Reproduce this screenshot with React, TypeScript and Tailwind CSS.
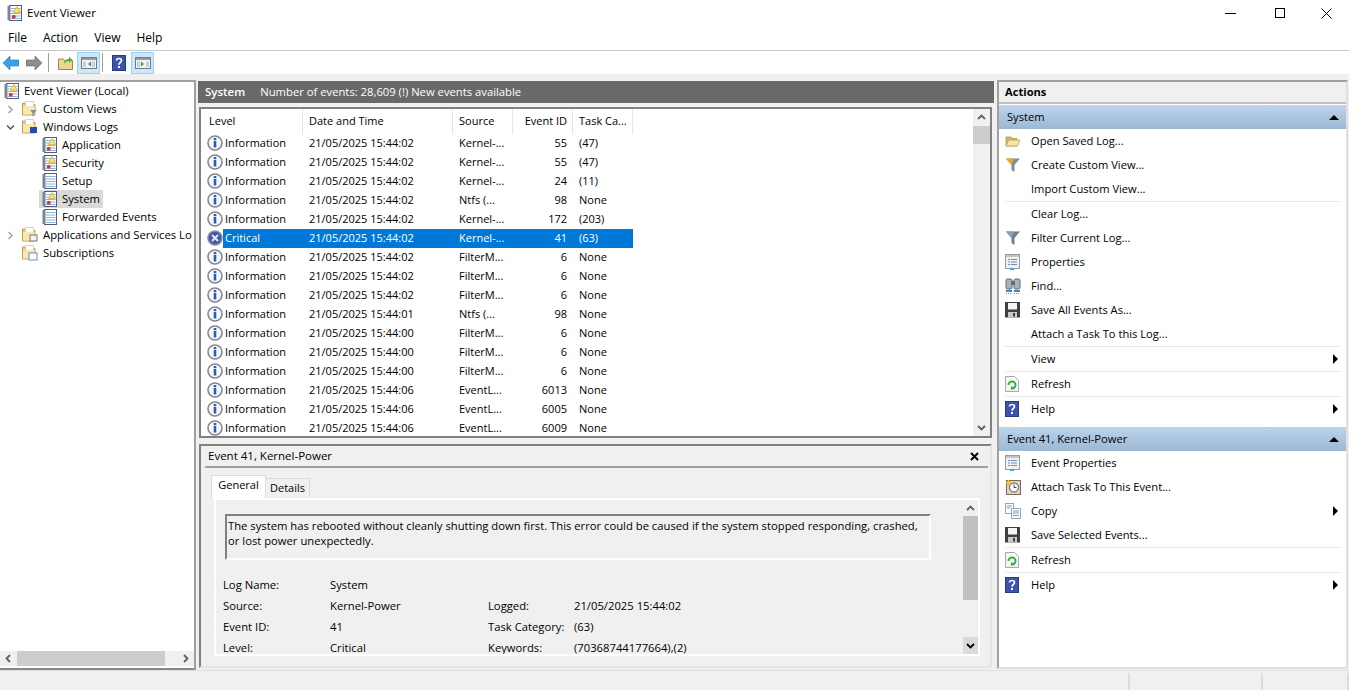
import React from "react";

const rows = [
  ["Information", "21/05/2025 15:44:02", "Kernel-...", "55", "(47)"],
  ["Information", "21/05/2025 15:44:02", "Kernel-...", "55", "(47)"],
  ["Information", "21/05/2025 15:44:02", "Kernel-...", "24", "(11)"],
  ["Information", "21/05/2025 15:44:02", "Ntfs (...", "98", "None"],
  ["Information", "21/05/2025 15:44:02", "Kernel-...", "172", "(203)"],
  ["Critical", "21/05/2025 15:44:02", "Kernel-...", "41", "(63)"],
  ["Information", "21/05/2025 15:44:02", "FilterM...", "6", "None"],
  ["Information", "21/05/2025 15:44:02", "FilterM...", "6", "None"],
  ["Information", "21/05/2025 15:44:02", "FilterM...", "6", "None"],
  ["Information", "21/05/2025 15:44:01", "Ntfs (...", "98", "None"],
  ["Information", "21/05/2025 15:44:00", "FilterM...", "6", "None"],
  ["Information", "21/05/2025 15:44:00", "FilterM...", "6", "None"],
  ["Information", "21/05/2025 15:44:00", "FilterM...", "6", "None"],
  ["Information", "21/05/2025 15:44:06", "EventL...", "6013", "None"],
  ["Information", "21/05/2025 15:44:06", "EventL...", "6005", "None"],
  ["Information", "21/05/2025 15:44:06", "EventL...", "6009", "None"],
];

function LogIcon({ warn = true }: { warn?: boolean }) {
  return (
    <svg width="16" height="16" viewBox="0 0 16 16" className="shrink-0">
      <rect x="2.5" y="0.5" width="12" height="15" fill="#fff" stroke="#4f5f7d" />
      <rect x="0.5" y="1" width="3" height="14" fill="#7a8598" />
      <path d="M4 3.500h9.500M4 6h9.500M4 8.500h9.500M4 11h9.500M4 13.500h9.500" stroke="#8fb0d8" />
      {warn && <path d="M10 1.500 13.500 7.500h-7z" fill="#f8e36a" stroke="#c9a21f" strokeWidth="0.6" />}
      {warn && <rect x="5" y="10" width="3.500" height="3.500" rx="1.200" fill="#d8323c" />}
    </svg>
  );
}

function FolderIcon({ children }: { children?: React.ReactNode }) {
  return (
    <svg width="16" height="16" viewBox="0 0 16 16" className="shrink-0">
      <path d="M0.5 2h5l1 1.500h6.500v10.500H0.500z" fill="#e9cb7c" stroke="#c0a052" />
      <path d="M3.500 0.500h8v5h-8z" fill="#fff" stroke="#c9c2ac" strokeWidth="0.7" />
      <path d="M1 5h11.500v8.500H1z" fill="#fae7ad" />
      {children}
    </svg>
  );
}

function InfoIcon() {
  return (
    <svg width="16" height="16" viewBox="0 0 16 16" className="shrink-0">
      <circle cx="8" cy="8" r="7" fill="#f7f8fa" stroke="#84878f" strokeWidth="1.600" />
      <rect x="6.700" y="3" width="2.600" height="2.200" fill="#2c5cb4" />
      <rect x="6.700" y="6" width="2.600" height="6.500" fill="#2c5cb4" />
    </svg>
  );
}

function CriticalIcon() {
  return (
    <svg width="16" height="16" viewBox="0 0 16 16" className="shrink-0">
      <circle cx="8" cy="8" r="7" fill="#3f5aa8" stroke="#8d8f9c" strokeWidth="1.600" />
      <path d="M5 5l6 6M11 5l-6 6" stroke="#e8e6f2" strokeWidth="1.900" />
    </svg>
  );
}

function HelpIcon({ size = 14 }: { size?: number }) {
  return (
    <svg width={size} height={size + 2} viewBox="0 0 14 16" className="shrink-0">
      <rect x="0.5" y="0.5" width="13" height="15" fill="#3a52b0" stroke="#2a3a80" />
      <path d="M4.500 5.500C4.500 2.800 9.500 2.800 9.500 5.500 9.500 7.500 7 7.500 7 9.700" fill="none" stroke="#fff" strokeWidth="1.700" />
      <rect x="6" y="11" width="2" height="2" fill="#fff" />
    </svg>
  );
}

function PaneIcon({ side }: { side: "left" | "right" }) {
  return (
    <svg width="16" height="12" viewBox="0 0 16 12">
      <rect x="0.5" y="0.5" width="15" height="11" fill="#f4f4f4" stroke="#7a7a7a" />
      <rect x="1" y="1" width="14" height="2" fill="#9a9a9a" />
      <rect x="2" y="4.500" width="3" height="5.500" fill="#bcd0e6" />
      <rect x="11" y="4.500" width="3" height="5.500" fill="#bcd0e6" />
      {side === "left" ? <path d="M10 4.500v5L7 7z" fill="#2f9e44" /> : <path d="M6 4.500v5L9 7z" fill="#2f9e44" />}
    </svg>
  );
}

function Chevron({ open = false }: { open?: boolean }) {
  return (
    <svg width="9" height="9" viewBox="0 0 9 9" className="shrink-0">
      {open ? (
        <path d="M1 2.500 4.500 6 8 2.500" fill="none" stroke="#555" strokeWidth="1.500" />
      ) : (
        <path d="M2.500 1 6 4.500 2.500 8" fill="none" stroke="#a6a6a6" strokeWidth="1.500" />
      )}
    </svg>
  );
}

function ScrollArrow({ dir, color = "#606060" }: { dir: "up" | "down" | "left" | "right"; color?: string }) {
  const d = {
    up: "M1 6 4.500 2.500 8 6",
    down: "M1 3 4.500 6.500 8 3",
    left: "M6 1 2.500 4.500 6 8",
    right: "M3 1 6.500 4.500 3 8",
  }[dir];
  return (
    <svg width="9" height="9" viewBox="0 0 9 9">
      <path d={d} fill="none" stroke={color} strokeWidth="1.800" />
    </svg>
  );
}

function BranchRow({ chevron, icon, label }: { chevron?: "open" | "closed"; icon: React.ReactNode; label: string }) {
  return (
    <div className="flex h-[18px] items-center whitespace-nowrap pl-[4px]">
      <span className="mr-[5px] flex w-[13px] justify-center">
        {chevron && <Chevron open={chevron === "open"} />}
      </span>
      {icon}
      <span className="ml-[5px] text-[11.3px]">{label}</span>
    </div>
  );
}

function LeafRow({ warn, label, selected }: { warn?: boolean; label: string; selected?: boolean }) {
  return (
    <div className="flex h-[18px] pl-[39px]">
      <span className={`flex items-center px-[3px] ${selected ? "bg-[#d9d9d9]" : ""}`}>
        <LogIcon warn={warn} />
        <span className="ml-[4px] text-[11.3px]">{label}</span>
      </span>
    </div>
  );
}

function ActionRow({ icon, label, arrow }: { icon?: React.ReactNode; label: string; arrow?: boolean }) {
  return (
    <div className="flex h-6 items-center pl-[6px] pr-[8px]">
      <span className="flex w-[26px] shrink-0 items-center">{icon}</span>
      <span className="flex-1">{label}</span>
      {arrow && <span className="h-0 w-0 border-y-[5px] border-l-[5px] border-y-transparent border-l-black" />}
    </div>
  );
}

function Sep() {
  return <div className="mx-[6px] h-px bg-[#e8e8e8]" />;
}

function Band({ label }: { label: string }) {
  return (
    <div className="flex h-6 items-center justify-between bg-gradient-to-b from-[#bdd4ea] to-[#9cb8d5] pl-[8px] pr-[7px]">
      <span>{label}</span>
      <span className="h-0 w-0 border-x-[5px] border-b-[5px] border-x-transparent border-b-black" />
    </div>
  );
}

function FolderOpenIcon() {
  return (
    <svg width="16" height="14" viewBox="0 0 16 14">
      <path d="M1 3h5l1 1.500h5V12H1z" fill="#d8b765" stroke="#a98a3e" strokeWidth="0.7" />
      <path d="M1 12 3.500 6H15l-2.500 6z" fill="#f5e2a5" stroke="#b99a4c" strokeWidth="0.7" />
    </svg>
  );
}

function FunnelIcon({ top, bottom }: { top: string; bottom: string }) {
  return (
    <svg width="16" height="16" viewBox="0 0 16 16">
      <path d="M1 1.500h14L9.500 8v7l-3-2V8z" fill={bottom} />
      <path d="M1 1.500h8L6.500 8z" fill={top} />
    </svg>
  );
}

function PropsIcon() {
  return (
    <svg width="15" height="16" viewBox="0 0 15 16">
      <rect x="0.5" y="0.5" width="14" height="14" fill="#f2f2f2" stroke="#9a9a9a" />
      <rect x="1" y="1" width="13" height="2" fill="#c4c4c4" />
      <path d="M3 5.500h2M6 5.500h6M3 8h2M6 8h6M3 10.500h2M6 10.500h6" stroke="#6d8fb5" />
      <rect x="5" y="14" width="4" height="2" fill="#35a9e0" />
    </svg>
  );
}

function BinocularIcon() {
  return (
    <svg width="16" height="16" viewBox="0 0 16 16">
      <rect x="1" y="1" width="6" height="10" rx="1.500" fill="#aab2bd" stroke="#5e6670" />
      <rect x="9" y="1" width="6" height="10" rx="1.500" fill="#aab2bd" stroke="#5e6670" />
      <rect x="6.500" y="3" width="3" height="4" fill="#5e6670" />
      <path d="M1 13h6M9 13h6" stroke="#2f8fd0" strokeWidth="2" />
      <path d="M1 15.500h6M9 15.500h6" stroke="#8a8a8a" strokeDasharray="1 1" />
    </svg>
  );
}

function SaveIcon() {
  return (
    <svg width="15" height="16" viewBox="0 0 15 16">
      <path d="M0 0h15v15.500H0z" fill="#3c3f44" />
      <rect x="3" y="1" width="9" height="6.500" fill="#f4f4f4" />
      <rect x="3" y="10" width="9" height="5.500" fill="#c9c9c9" />
      <rect x="8" y="11" width="2" height="3.500" fill="#3c3f44" />
    </svg>
  );
}

function RefreshIcon() {
  return (
    <svg width="14" height="16" viewBox="0 0 14 16">
      <path d="M0.5 0.5h9l4 4v11h-13z" fill="#f6f6f6" stroke="#a8a8a8" />
      <path d="M3.500 9a3.500 3.500 0 1 1 3.500 3.500" fill="none" stroke="#38b04a" strokeWidth="2" />
      <path d="M6 10v4l3.500-2z" fill="#38b04a" />
    </svg>
  );
}

function ClockIcon() {
  return (
    <svg width="16" height="16" viewBox="0 0 16 16">
      <rect x="1.500" y="1.500" width="14" height="14" fill="#d8d2c8" stroke="#7d6b58" />
      <circle cx="9" cy="8.500" r="4.500" fill="#fff" stroke="#555" />
      <path d="M9 5.500v3h2.500" fill="none" stroke="#444" />
      <path d="M3.500 0.500 5 3l2.500.5L5 5 3.500 7 2 5 0 3.500 2 3z" fill="#f5c02e" />
    </svg>
  );
}

function CopyIcon() {
  return (
    <svg width="16" height="16" viewBox="0 0 16 16">
      <rect x="0.5" y="0.5" width="8" height="10" fill="#fff" stroke="#9ba6b3" />
      <rect x="6.500" y="5.500" width="9" height="10" fill="#fff" stroke="#9ba6b3" />
      <path d="M2 3h5M2 5h3M8 8h6M8 10h6M8 12.500h6" stroke="#6d9bd1" />
    </svg>
  );
}

function Field({ label, value, wide }: { label: string; value: string; wide?: boolean }) {
  return (
    <div className="flex">
      <span className={wide ? "w-[86px]" : "w-[107px]"}>{label}</span>
      <span className="whitespace-nowrap">{value}</span>
    </div>
  );
}

export default function App() {
  return (
    <div className="flex h-[690px] w-[1349px] flex-col overflow-hidden bg-[#f0f0f0] font-['Open_Sans',sans-serif] text-[11px] text-black">
      {/* title bar */}
      <div className="flex h-[26px] items-center bg-white pl-[7px] text-[11.5px]">
        <LogIcon />
        <span className="ml-[4px] flex-1">Event Viewer</span>
        <div className="flex items-center">
          <span className="mr-[39px] h-px w-[11px] bg-black" />
          <span className="mr-[36px] h-[10px] w-[10px] border border-black" />
          <svg width="11" height="11" viewBox="0 0 11 11" className="mr-[17px]">
            <path d="M0.5 0.5l10 10M10.500 0.5l-10 10" stroke="#000" />
          </svg>
        </div>
      </div>
      {/* menu */}
      <div className="flex h-[25px] items-center gap-[16px] border-b border-[#c8c8c8] bg-white pl-[8px] text-[12px]">
        <span>File</span>
        <span>Action</span>
        <span>View</span>
        <span>Help</span>
      </div>
      {/* toolbar */}
      <div className="flex h-[23px] items-center bg-white pl-[3px]">
        <svg width="16" height="14" viewBox="0 0 16 14">
          <path d="M0 7 7 0v4h9v6H7v4z" fill="#3aa0e8" stroke="#1f78c0" strokeWidth="0.6" />
        </svg>
        <svg width="16" height="14" viewBox="0 0 16 14" className="ml-[7px]">
          <path d="M16 7 9 0v4H0v6h9v4z" fill="#8d8d8d" stroke="#666" strokeWidth="0.6" />
        </svg>
        <span className="ml-[6px] h-[19px] w-px bg-[#a0a0a0]" />
        <svg width="15" height="15" viewBox="0 0 15 15" className="ml-[9px]">
          <path d="M0.5 4h5l1 1.500h8v9h-14z" fill="#ecd690" stroke="#a08a3e" />
          <path d="M6 9c0-3 2-5 5-5V1.500L14.500 5 11 8V6C9 6 7.500 7 6 9z" fill="#4caf50" />
        </svg>
        <span className="ml-[4px] flex h-[22px] w-[23px] items-center justify-center border border-[#99d1ff] bg-[#cce8ff]">
          <PaneIcon side="left" />
        </span>
        <span className="ml-[2px] h-[19px] w-px bg-[#a0a0a0]" />
        <span className="ml-[9px]">
          <HelpIcon />
        </span>
        <span className="ml-[5px] flex h-[22px] w-[23px] items-center justify-center border border-[#99d1ff] bg-[#cce8ff]">
          <PaneIcon side="right" />
        </span>
      </div>

      {/* panes */}
      <div className="mt-[6px] flex h-[590px] gap-[2px]">
        {/* tree */}
        <div className="flex w-[196px] flex-col border-y-2 border-r-2 border-[#a0a0a0] border-b-[#888] bg-white">
          <div className="flex-1 overflow-hidden">
            <div className="flex h-[18px] items-center pl-[4px]">
              <LogIcon />
              <span className="ml-[4px] text-[11.3px]">Event Viewer (Local)</span>
            </div>
            <BranchRow chevron="closed" icon={<FolderIcon><path d="M8 9h7l-3 3v3h-1.500v-3z" fill="#7d8fa8" /></FolderIcon>} label="Custom Views" />
            <BranchRow chevron="open" icon={<FolderIcon><rect x="8" y="8" width="7" height="6" fill="#1f4fa8" /></FolderIcon>} label="Windows Logs" />
            <LeafRow label="Application" />
            <LeafRow label="Security" />
            <LeafRow warn={false} label="Setup" />
            <LeafRow label="System" selected />
            <LeafRow warn={false} label="Forwarded Events" />
            <BranchRow chevron="closed" icon={<FolderIcon><rect x="8" y="8" width="7" height="6" fill="#f4f4f4" stroke="#777" /></FolderIcon>} label="Applications and Services Lo" />
            <BranchRow icon={<FolderIcon><rect x="7" y="8" width="8" height="7" fill="#fff" stroke="#5b8fd0" /></FolderIcon>} label="Subscriptions" />
          </div>
          <div className="mb-[2px] flex h-[15px] items-center bg-[#f0f0f0]">
            <span className="flex w-[17px] justify-center"><ScrollArrow dir="left" /></span>
            <span className="h-[15px] w-[148px] bg-[#cdcdcd]" />
            <span className="flex-1" />
            <span className="flex w-[17px] justify-center"><ScrollArrow dir="right" /></span>
          </div>
        </div>

        {/* centre */}
        <div className="flex w-[797px] flex-col">
          <div className="mr-px mt-px flex h-[22px] items-center bg-[#696969] pl-[7px] text-white">
            <span className="text-[11.5px] font-semibold">System</span>
            <span className="ml-[15px] text-[11.25px]">Number of events: 28,609 (!) New events available</span>
          </div>
          {/* events list */}
          <div className="ml-px mr-[3px] mt-[4px] flex h-[331px] border-2 border-[#808080] bg-white">
            <div className="ml-[3px] flex-1 overflow-hidden">
              <div className="flex h-[25px] items-center">
                <div className="flex h-full w-[99px] items-center border-r border-[#e5e5e5] pl-[5px]">Level</div>
                <div className="flex h-full w-[150px] items-center border-r border-[#e5e5e5] pl-[6px]">Date and Time</div>
                <div className="flex h-full w-[60px] items-center border-r border-[#e5e5e5] pl-[6px]">Source</div>
                <div className="flex h-full w-[60px] items-center justify-end border-r border-[#e5e5e5] pr-[5px]">Event ID</div>
                <div className="flex h-full w-[60px] items-center border-r border-[#e5e5e5] pl-[6px]">Task Ca...</div>
              </div>
              {rows.map((r, i) => {
                const critical = r[0] === "Critical";
                return (
                  <div key={i} className="flex h-[19px] items-center whitespace-nowrap">
                    <div className="mb-[2px] flex w-[19px] justify-end">{critical ? <CriticalIcon /> : <InfoIcon />}</div>
                    <div className={`flex h-full w-[410px] items-center ${critical ? "bg-[#0078d7] text-white" : ""}`}>
                      <span className="w-[86px] pl-[2px]">{r[0]}</span>
                      <span className="w-[150px]">{r[1]}</span>
                      <span className="w-[54px]">{r[2]}</span>
                      <span className="w-[54px] text-right">{r[3]}</span>
                      <span className="ml-[12px]">{r[4]}</span>
                    </div>
                  </div>
                );
              })}
            </div>
            <div className="flex w-[17px] flex-col items-center bg-[#f0f0f0]">
              <span className="flex h-[17px] items-center"><ScrollArrow dir="up" /></span>
              <span className="h-[18px] w-[17px] bg-[#cdcdcd]" />
              <span className="flex-1" />
              <span className="flex h-[17px] items-center"><ScrollArrow dir="down" /></span>
            </div>
          </div>
          {/* detail */}
          <div className="ml-px mr-[3px] mt-[6px] flex h-[224px] flex-col border-2 border-[#e5e5e5] border-l-[#808080] border-t-[#808080] pl-[4px] pr-[2px]">
            <div className="flex h-[22px] shrink-0 items-center justify-between border-b-2 border-[#a0a0a0] pl-[3px] pr-[9px]">
              <span className="text-[11.5px]">Event 41, Kernel-Power</span>
              <svg width="9" height="9" viewBox="0 0 9 9">
                <path d="M1 1l7 7M8 1l-7 7" stroke="#000" strokeWidth="2" />
              </svg>
            </div>
            <div className="ml-[6px] mt-[7px] flex h-[23px] shrink-0 items-end">
              <span className="flex h-[23px] w-[55px] items-center justify-center border border-b-0 border-[#dcdcdc] bg-white pb-[3px]">General</span>
              <span className="flex h-[20px] w-[44px] items-center justify-center border border-b-0 border-l-0 border-[#dcdcdc]">Details</span>
            </div>
            <div className="ml-[9px] mr-[8px] flex h-[158px] shrink-0 overflow-hidden border-2 border-white">
              <div className="flex-1 overflow-hidden pl-[7px] text-[11.25px]">
                <div className="ml-[2px] mt-[14px] h-[46px] w-[706px] border-2 border-[#808080] border-b-white border-r-white pl-px pt-[2px] leading-[15px]">
                  The system has rebooted without cleanly shutting down first. This error could be caused if the system stopped responding, crashed, or lost power unexpectedly.
                </div>
                <div className="mt-[17px] flex flex-col gap-[6px] leading-[15px]">
                  <Field label="Log Name:" value="System" />
                  <div className="flex">
                    <div className="w-[265px]"><Field label="Source:" value="Kernel-Power" /></div>
                    <Field wide label="Logged:" value="21/05/2025 15:44:02" />
                  </div>
                  <div className="flex">
                    <div className="w-[265px]"><Field label="Event ID:" value="41" /></div>
                    <Field wide label="Task Category:" value="(63)" />
                  </div>
                  <div className="flex">
                    <div className="w-[265px]"><Field label="Level:" value="Critical" /></div>
                    <Field wide label="Keywords:" value="(70368744177664),(2)" />
                  </div>
                </div>
              </div>
              <div className="flex w-[15px] flex-col items-center">
                <span className="flex h-[16px] items-center"><ScrollArrow dir="up" /></span>
                <span className="h-[84px] w-[15px] bg-[#c0c0c0]" />
                <span className="flex-1" />
                <span className="flex h-[17px] w-[15px] items-center justify-center bg-[#dadada]"><ScrollArrow dir="down" color="#000" /></span>
              </div>
            </div>
          </div>
        </div>

        {/* actions */}
        <div className="mb-[1px] mr-px flex flex-1 flex-col border-2 border-[#e0e0e0] border-l-[#a0a0a0] border-t-[#a0a0a0] bg-white text-[11.15px]">
          <div className="flex h-[22px] shrink-0 items-center border-b-2 border-[#c0c0c0] bg-[#f0f0f0] pl-[6px] font-bold">Actions</div>
          <div className="mt-px" />
          <Band label="System" />
          <ActionRow icon={<FolderOpenIcon />} label="Open Saved Log..." />
          <ActionRow icon={<FunnelIcon top="#f5a51e" bottom="#7d8c9c" />} label="Create Custom View..." />
          <ActionRow label="Import Custom View..." />
          <Sep />
          <ActionRow label="Clear Log..." />
          <ActionRow icon={<FunnelIcon top="#8aa0b8" bottom="#6d7f92" />} label="Filter Current Log..." />
          <ActionRow icon={<PropsIcon />} label="Properties" />
          <ActionRow icon={<BinocularIcon />} label="Find..." />
          <ActionRow icon={<SaveIcon />} label="Save All Events As..." />
          <ActionRow label="Attach a Task To this Log..." />
          <Sep />
          <ActionRow label="View" arrow />
          <Sep />
          <ActionRow icon={<RefreshIcon />} label="Refresh" />
          <Sep />
          <ActionRow icon={<HelpIcon />} label="Help" arrow />
          <div className="h-[6px]" />
          <Band label="Event 41, Kernel-Power" />
          <ActionRow icon={<PropsIcon />} label="Event Properties" />
          <ActionRow icon={<ClockIcon />} label="Attach Task To This Event..." />
          <ActionRow icon={<CopyIcon />} label="Copy" arrow />
          <ActionRow icon={<SaveIcon />} label="Save Selected Events..." />
          <Sep />
          <ActionRow icon={<RefreshIcon />} label="Refresh" />
          <Sep />
          <ActionRow icon={<HelpIcon />} label="Help" arrow />
        </div>
      </div>
      {/* status bar */}
      <div className="flex flex-1 justify-end border-t border-[#e0e0e0] pt-[2px]">
        <span className="w-[133px] border-l-2 border-[#dcdcdc]" />
        <span className="w-[86px] border-l-2 border-[#dcdcdc]" />
        <span className="w-[2px] border-l-2 border-[#dcdcdc]" />
      </div>
    </div>
  );
}
